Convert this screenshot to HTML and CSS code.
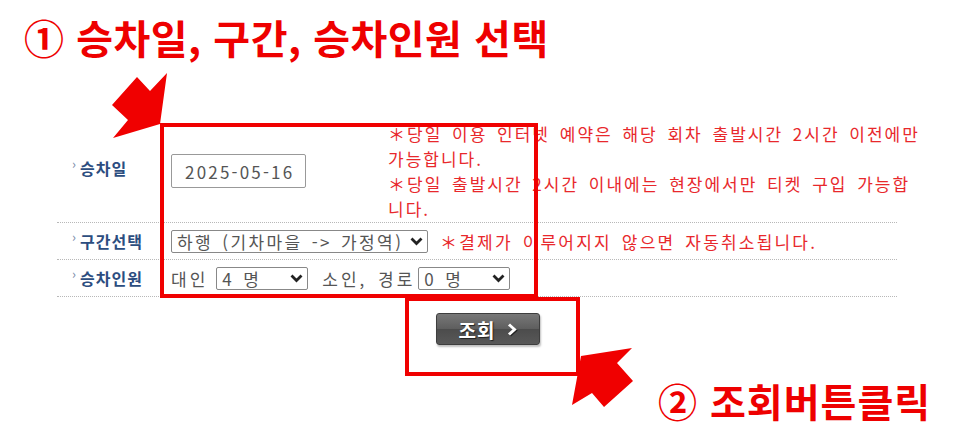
FILE: index.html
```html
<!DOCTYPE html>
<html lang="ko">
<head>
    <meta charset="UTF-8">
    <meta name="viewport" content="width=device-width, initial-scale=1.0">
    <title>승차권 예매 안내</title>
    <link rel="stylesheet" href="styles.css">
</head>
<body>
    <div class="page">
        <h1 class="guide-title">① 승차일, 구간, 승차인원 선택</h1>

        <div class="board">
            <div class="row row-date">
                <div class="label">승차일</div>
                <div class="cell">
                    <input type="text" class="date-input" value="2025-05-16">
                    <div class="notes">
                        <p>＊당일 이용 인터넷 예약은 해당 회차 출발시간 2시간 이전에만 가능합니다.</p>
                        <p>＊당일 출발시간 2시간 이내에는 현장에서만 티켓 구입 가능합니다.</p>
                    </div>
                </div>
            </div>
            <div class="row">
                <div class="label">구간선택</div>
                <div class="cell">
                    <span class="select-wrap route">
                        <select>
                            <option>하행 (기차마을 -&gt; 가정역)</option>
                        </select>
                        <svg class="chev" width="13" height="9" viewBox="0 0 13 9"><path d="M1.5 1.5 L6.5 6.5 L11.5 1.5" fill="none" stroke="#222" stroke-width="2.8"/></svg>
                    </span>
                    <span class="note-inline">＊결제가 이루어지지 않으면 자동취소됩니다.</span>
                </div>
            </div>
            <div class="row">
                <div class="label">승차인원</div>
                <div class="cell">
                    <span class="txt">대인</span>
                    <span class="select-wrap count">
                        <select><option>4 명</option></select>
                        <svg class="chev" width="13" height="9" viewBox="0 0 13 9"><path d="M1.5 1.5 L6.5 6.5 L11.5 1.5" fill="none" stroke="#222" stroke-width="2.8"/></svg>
                    </span>
                    <span class="txt txt-gap">소인, 경로</span>
                    <span class="select-wrap count">
                        <select><option>0 명</option></select>
                        <svg class="chev" width="13" height="9" viewBox="0 0 13 9"><path d="M1.5 1.5 L6.5 6.5 L11.5 1.5" fill="none" stroke="#222" stroke-width="2.8"/></svg>
                    </span>
                </div>
            </div>
        </div>

        <div class="btn-area">
            <button type="button" class="search-btn">조회
                <svg class="arr" width="10" height="13" viewBox="0 0 10 13"><path d="M2 1.5 L7.5 6.5 L2 11.5" fill="none" stroke="#fff" stroke-width="3"/></svg>
            </button>
        </div>

        <div class="guide-step">② 조회버튼클릭</div>

        <!-- annotation marks -->
        <svg class="marks" width="958" height="431" viewBox="0 0 958 431">
            <rect x="162" y="125" width="374" height="171" fill="none" stroke="#f00000" stroke-width="4"/>
            <rect x="407" y="299" width="171" height="75" fill="none" stroke="#f00000" stroke-width="4"/>
            <polygon points="167,73 160,124 113,138 128,120 112,105 137,77 150,91" fill="#f00000"/>
            <polygon points="581,356 632,348 617,363 633,381 604,407 592,393 572,405" fill="#f00000"/>
        </svg>
    </div>
</body>
</html>
```

FILE: styles.css
```css
* {
    margin: 0;
    padding: 0;
    box-sizing: border-box;
}

body {
    background-color: #ffffff;
    font-family: "Noto Sans CJK KR", "Noto Sans", sans-serif;
}

.page {
    position: relative;
    width: 958px;
    height: 431px;
    overflow: hidden;
}

.guide-title {
    padding: 12px 0 0 24px;
    height: 120px;
    color: #ee0000;
    font-size: 40px;
    line-height: 50px;
    font-weight: 700;
    letter-spacing: 0.5px;
}

.board {
    margin-left: 57px;
    width: 840px;
}

.row {
    display: flex;
    align-items: center;
    height: 37px;
    border-bottom: 1px dotted #b8b8b8;
}

.row-date {
    height: 103px;
}

.label {
    flex-shrink: 0;
    width: 110px;
    padding-left: 23px;
    position: relative;
    color: #2c4d80;
    font-size: 16px;
    font-weight: 700;
    letter-spacing: 1px;
}

.row-date .label {
    margin-top: -6px;
}

.label::before {
    content: "›";
    position: absolute;
    left: 15px;
    top: -2px;
    color: #7a8aa8;
    font-size: 13px;
    font-weight: 400;
}

.cell {
    flex: 1;
    display: flex;
    align-items: center;
    padding-left: 4px;
    color: #555;
    font-size: 17px;
}

.date-input {
    flex-shrink: 0;
    width: 135px;
    height: 34px;
    border: 1px solid #999;
    border-radius: 2px;
    padding-left: 13px;
    font-family: "Noto Sans CJK KR", sans-serif;
    font-size: 17px;
    color: #555;
    letter-spacing: 2.2px;
}

.notes {
    flex-shrink: 0;
    margin-left: 82px;
    width: 536px;
    color: #e8282c;
    font-size: 17px;
    line-height: 25px;
    letter-spacing: 2px;
    word-spacing: 3px;
}

.select-wrap {
    position: relative;
    display: inline-block;
}

.select-wrap select {
    -webkit-appearance: none;
    appearance: none;
    display: block;
    height: 23px;
    border: 1px solid #888;
    border-radius: 2px;
    background: #fff;
    padding: 0 0 0 5px;
    font-family: "Noto Sans CJK KR", sans-serif;
    font-size: 17px;
    line-height: 21px;
    color: #555;
    letter-spacing: 2.4px;
    word-spacing: 2px;
}

.select-wrap .chev {
    position: absolute;
    right: 5px;
    top: 7px;
    pointer-events: none;
}

.route select {
    width: 257px;
}

.count select {
    width: 92px;
}

.note-inline {
    margin-left: 12px;
    color: #e8282c;
    letter-spacing: 2.2px;
    word-spacing: 3px;
}

.txt {
    margin-right: 8px;
    letter-spacing: 3px;
    word-spacing: 3px;
}

.txt-gap {
    margin-left: 14px;
    margin-right: 3px;
}

.btn-area {
    padding: 16px 0 0 436px;
}

.search-btn {
    display: flex;
    align-items: center;
    justify-content: center;
    gap: 12px;
    width: 104px;
    height: 32px;
    border: 1px solid #3e3e3e;
    border-radius: 3px;
    background: linear-gradient(#787878 0%, #5e5e5e 50%, #4c4c4c 51%, #585858 100%);
    box-shadow: 1px 2px 2px rgba(0, 0, 0, 0.25);
    color: #fff;
    font-family: "Noto Sans CJK KR", sans-serif;
    font-size: 19px;
    font-weight: 700;
    letter-spacing: 1px;
    text-shadow: 1px 1px 1px #222;
}

.search-btn .arr {
    filter: drop-shadow(1px 1px 0 #222);
}

.guide-step {
    margin: 32px 0 0 658px;
    color: #ee0000;
    font-size: 39px;
    line-height: 46px;
    font-weight: 700;
    letter-spacing: 1px;
}

.marks {
    position: absolute;
    left: 0;
    top: 0;
    pointer-events: none;
}
```
